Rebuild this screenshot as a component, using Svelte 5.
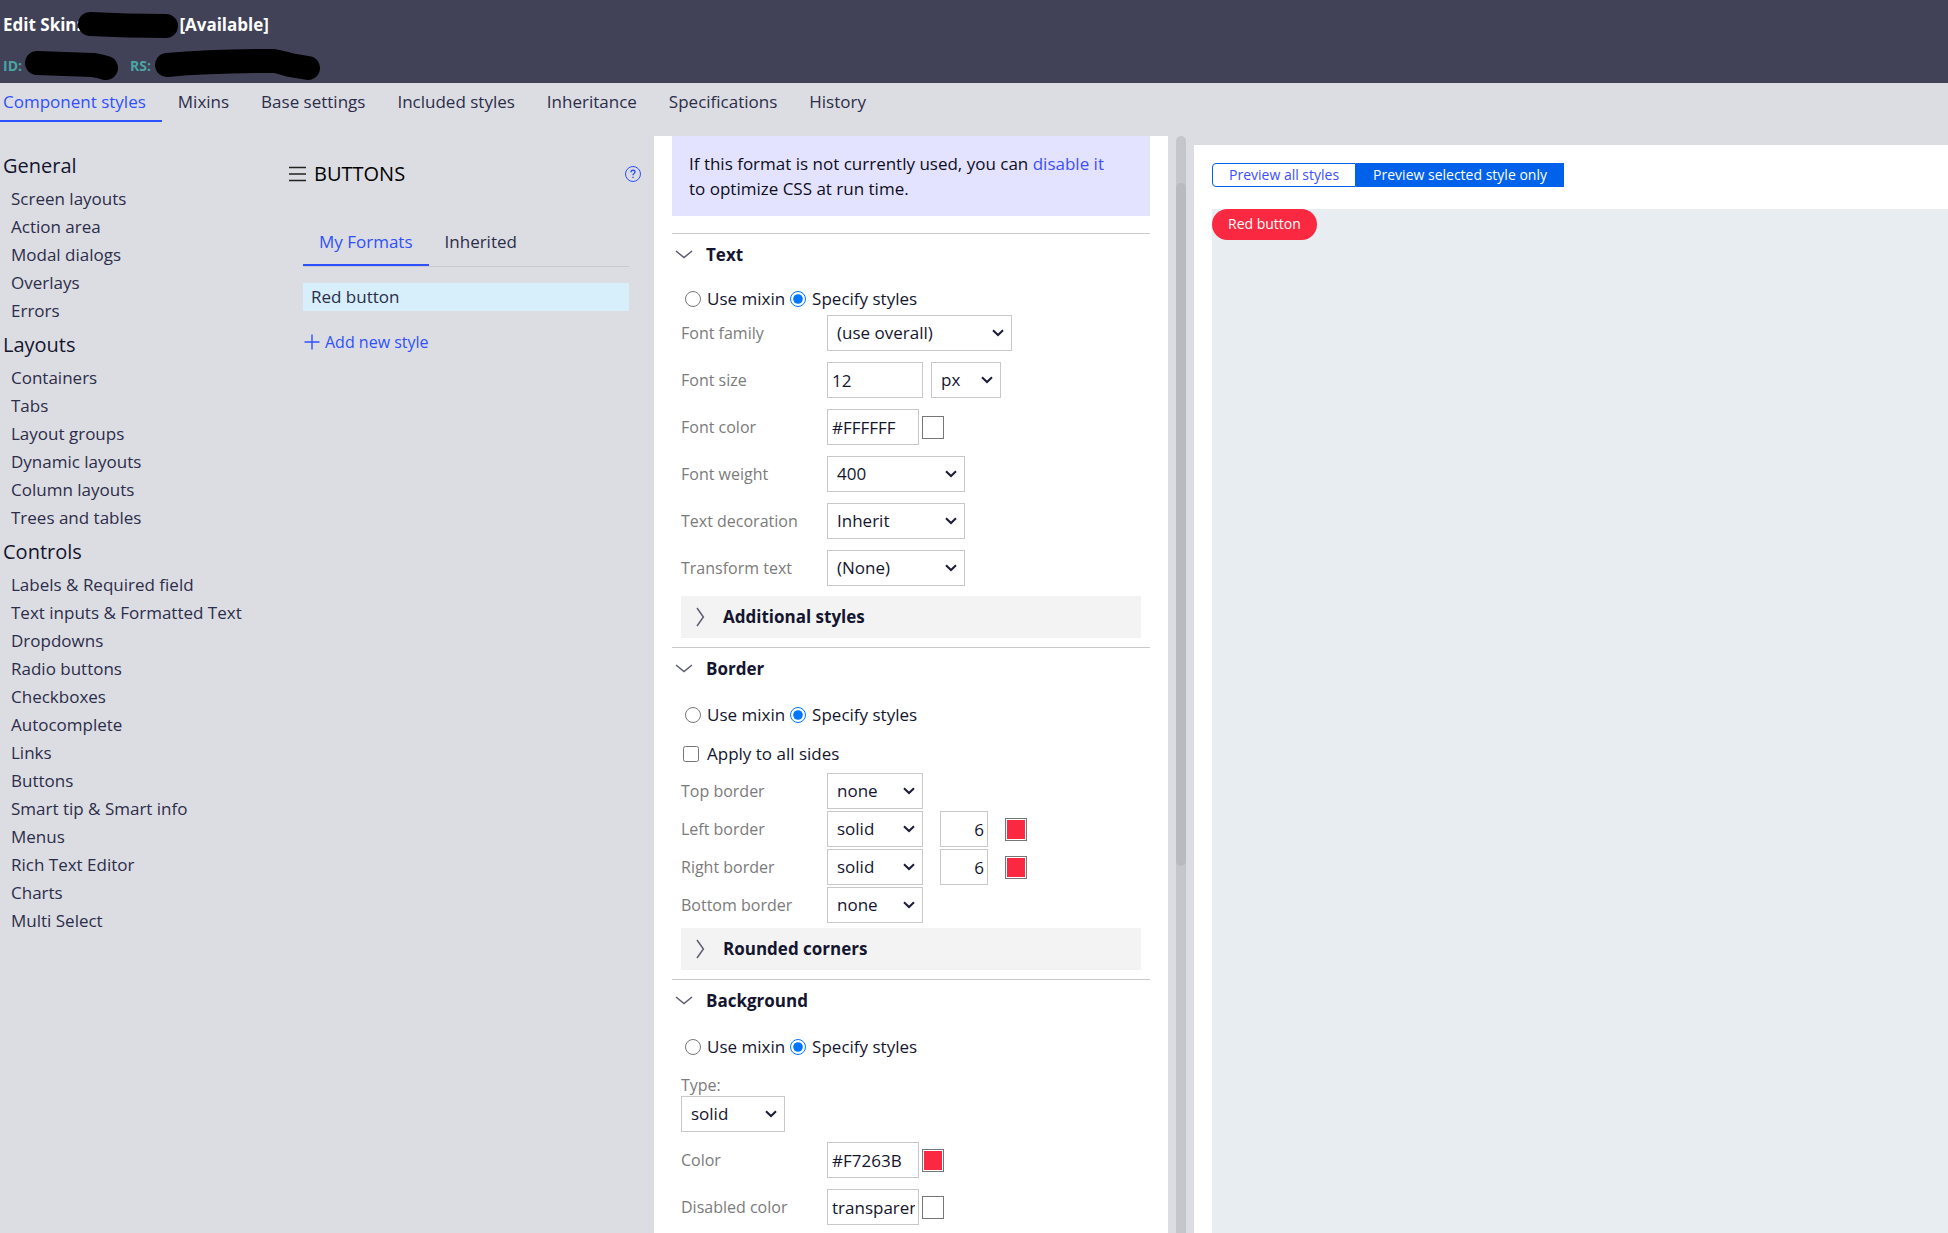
<script>
  let activeTab = $state('Component styles');
  let activeFormat = $state('My Formats');
  let previewAll = $state(false);

  let textMode = $state('specify');
  let borderMode = $state('specify');
  let backgroundMode = $state('specify');
  let allSides = $state(false);

  const tabs = [
    'Component styles',
    'Mixins',
    'Base settings',
    'Included styles',
    'Inheritance',
    'Specifications',
    'History',
  ];

  const groups = [
    {
      title: 'General',
      items: [
        'Screen layouts',
        'Action area',
        'Modal dialogs',
        'Overlays',
        'Errors',
      ],
    },
    {
      title: 'Layouts',
      items: [
        'Containers',
        'Tabs',
        'Layout groups',
        'Dynamic layouts',
        'Column layouts',
        'Trees and tables',
      ],
    },
    {
      title: 'Controls',
      items: [
        'Labels & Required field',
        'Text inputs & Formatted Text',
        'Dropdowns',
        'Radio buttons',
        'Checkboxes',
        'Autocomplete',
        'Links',
        'Buttons',
        'Smart tip & Smart info',
        'Menus',
        'Rich Text Editor',
        'Charts',
        'Multi Select',
      ],
    },
  ];

  const sides = [
    { label: 'Top border', style: 'none' },
    { label: 'Left border', style: 'solid', width: 6, color: '#fa2840' },
    { label: 'Right border', style: 'solid', width: 6, color: '#fa2840' },
    { label: 'Bottom border', style: 'none' },
  ];
</script>

{#snippet dropdown(id, value, size, label)}
  <span class="dropdown {size}">
    <select {id} aria-label={label}>
      <option>{value}</option>
    </select>
    <svg width="12" height="8" viewBox="0 0 12 8" aria-hidden="true">
      <path d="M1 1.2 L6 6 L11 1.2" />
    </svg>
  </span>
{/snippet}

{#snippet swatch(color, label)}
  <button class="swatch" aria-label={label}>
    <span style:background={color}></span>
  </button>
{/snippet}

{#snippet sectionTitle(title)}
  <h3>
    <svg width="18" height="10" viewBox="0 0 18 10" aria-hidden="true">
      <path d="M1 1 L9 7.6 L17 1" />
    </svg>
    {title}
  </h3>
{/snippet}

{#snippet subSection(title)}
  <button class="sub">
    <svg width="9" height="20" viewBox="0 0 9 20" aria-hidden="true">
      <path d="M1 1 L7.4 10 L1 19" />
    </svg>
    {title}
  </button>
{/snippet}

<div class="page">
  <header>
    <div class="title-row">
      <span>Edit Skin:</span>
      <svg class="mask" width="102" height="24" aria-hidden="true">
        <path d="M13 11 Q50 13 89 13" />
      </svg>
      <span>[Available]</span>
    </div>
    <div class="id-row">
      <span>ID:</span>
      <svg class="mask" width="107" height="24" aria-hidden="true">
        <path d="M14 9 L70 11 Q77 12 83 14" />
      </svg>
      <span>RS:</span>
      <svg class="mask" width="168" height="24" aria-hidden="true">
        <path d="M15 11 Q60 7 122 7 Q128 8 138 11 L156 14" />
      </svg>
    </div>
  </header>

  <nav class="tabs">
    {#each tabs as tab}
      <button class:active={activeTab === tab} onclick={() => (activeTab = tab)}>
        {tab}
      </button>
    {/each}
  </nav>

  <div class="columns">
    <aside class="nav">
      {#each groups as group}
        <h2>{group.title}</h2>
        <ul>
          {#each group.items as item}
            <li><a href="#top">{item}</a></li>
          {/each}
        </ul>
      {/each}
    </aside>

    <section class="formats">
      <div class="formats-head">
        <svg width="17" height="16" viewBox="0 0 17 16" aria-hidden="true">
          <path d="M0 1.5 H17 M0 8 H17 M0 14.5 H17" stroke="#222" stroke-width="1.3" />
        </svg>
        <h2>BUTTONS</h2>
        <button class="help" aria-label="Help">
          <svg width="18" height="18" viewBox="0 0 18 18" aria-hidden="true">
            <circle cx="9" cy="9" r="7.5" />
            <path d="M7 7.2 Q7 5.2 9 5.2 Q11 5.2 11 6.8 Q11 7.8 10 8.5 Q9 9.1 9 10.2 M9 11.7 V13.1" stroke-width="1.4" />
          </svg>
        </button>
      </div>
      <div class="formats-body">
        <div class="format-tabs">
          {#each ['My Formats', 'Inherited'] as name}
            <button
              class:active={activeFormat === name}
              onclick={() => (activeFormat = name)}
            >
              {name}
            </button>
          {/each}
        </div>
        <button class="format">Red button</button>
        <button class="add">
          <svg width="16" height="16" viewBox="0 0 16 16" aria-hidden="true">
            <path d="M8 0.5 V15.5 M0.5 8 H15.5" />
          </svg>
          Add new style
        </button>
      </div>
    </section>

    <main class="editor">
      <p class="notice">
        If this format is not currently used, you can <a href="#top">disable it</a><br />
        to optimize CSS at run time.
      </p>

      <section class="text">
        {@render sectionTitle('Text')}
        <div class="choice">
          <label><input type="radio" value="mixin" bind:group={textMode} />Use mixin</label>
          <label><input type="radio" value="specify" bind:group={textMode} />Specify styles</label>
        </div>
        <div class="rows">
          <div class="row">
            <label for="family">Font family</label>
            {@render dropdown('family', '(use overall)', 'wide')}
          </div>
          <div class="row">
            <label for="size">Font size</label>
            <input id="size" class="field size" type="text" value="12" />
            {@render dropdown('unit', 'px', 'tiny', 'Font size unit')}
          </div>
          <div class="row">
            <label for="color">Font color</label>
            <input id="color" class="field" type="text" value="#FFFFFF" />
            {@render swatch('#ffffff', 'Pick font color')}
          </div>
          <div class="row">
            <label for="weight">Font weight</label>
            {@render dropdown('weight', '400', 'medium')}
          </div>
          <div class="row">
            <label for="decoration">Text decoration</label>
            {@render dropdown('decoration', 'Inherit', 'medium')}
          </div>
          <div class="row">
            <label for="transform">Transform text</label>
            {@render dropdown('transform', '(None)', 'medium')}
          </div>
        </div>
        {@render subSection('Additional styles')}
      </section>

      <section class="border">
        {@render sectionTitle('Border')}
        <div class="choice">
          <label><input type="radio" value="mixin" bind:group={borderMode} />Use mixin</label>
          <label><input type="radio" value="specify" bind:group={borderMode} />Specify styles</label>
        </div>
        <label class="check">
          <input type="checkbox" bind:checked={allSides} />Apply to all sides
        </label>
        <div class="rows">
          {#each sides as side, i}
            <div class="row">
              <label for="side{i}">{side.label}</label>
              {@render dropdown(`side${i}`, side.style, 'small')}
              {#if side.width}
                <input
                  class="field number"
                  type="text"
                  aria-label="{side.label} width"
                  value={side.width}
                />
                {@render swatch(side.color, `Pick ${side.label} color`)}
              {/if}
            </div>
          {/each}
        </div>
        {@render subSection('Rounded corners')}
      </section>

      <section class="background">
        {@render sectionTitle('Background')}
        <div class="choice">
          <label><input type="radio" value="mixin" bind:group={backgroundMode} />Use mixin</label>
          <label><input type="radio" value="specify" bind:group={backgroundMode} />Specify styles</label>
        </div>
        <div class="type">
          <label for="type">Type:</label>
          {@render dropdown('type', 'solid', 'type-select')}
        </div>
        <div class="rows">
          <div class="row">
            <label for="bg">Color</label>
            <input id="bg" class="field" type="text" value="#F7263B" />
            {@render swatch('#fa2840', 'Pick color')}
          </div>
          <div class="row">
            <label for="disabled">Disabled color</label>
            <input id="disabled" class="field" type="text" value="transparent" />
            {@render swatch('#ffffff', 'Pick disabled color')}
          </div>
        </div>
      </section>
    </main>

    <div class="rail"><div class="thumb"></div></div>

    <section class="preview">
      <div class="switch">
        <button class:on={previewAll} onclick={() => (previewAll = true)}>
          Preview all styles
        </button>
        <button class:on={!previewAll} onclick={() => (previewAll = false)}>
          Preview selected style only
        </button>
      </div>
      <div class="canvas">
        <button class="red">Red button</button>
      </div>
    </section>
  </div>
</div>

<style>
  :global(body) {
    margin: 0;
    background: #dcdde2;
  }

  .page {
    min-height: 100vh;
    display: flex;
    flex-direction: column;
    font-family: 'Open Sans', 'Noto Sans', sans-serif;
    font-size: 17px;
    line-height: 24px;
    color: #2c2d4a;
    background: #dcdde2;
  }

  button,
  input,
  select {
    font: inherit;
    color: inherit;
    margin: 0;
    box-sizing: border-box;
  }

  button {
    padding: 0;
    border: 0;
    background: none;
    cursor: pointer;
  }

  a {
    text-decoration: none;
  }

  h2,
  h3,
  ul,
  p {
    margin: 0;
    padding: 0;
    list-style: none;
  }

  svg {
    fill: none;
    flex: none;
  }

  header {
    padding: 13px 3px 5px;
    background: #414257;
    color: #fff;
    font-weight: 700;
  }

  .title-row,
  .id-row {
    display: flex;
    align-items: center;
  }

  .id-row {
    margin-top: 17px;
    font-size: 14px;
    color: #4aa5a5;
  }

  .mask {
    overflow: visible;
    margin-left: 1px;
    stroke: #000;
    stroke-width: 24;
    stroke-linecap: round;
    stroke-linejoin: round;
  }

  .title-row .mask {
    margin-left: -4px;
  }

  .tabs {
    display: flex;
  }

  .tabs button {
    height: 39px;
    padding: 0 16px;
    border-bottom: 2px solid transparent;
  }

  .tabs button:first-child {
    padding-left: 3px;
  }

  .tabs button.active,
  .format-tabs button.active {
    color: #2e50ff;
    border-bottom-color: #2e50ff;
  }

  .columns {
    flex: 1;
    display: grid;
    grid-template-columns: 288px 366px 514px 26px 1fr;
  }

  .nav {
    padding-top: 24px;
  }

  .nav h2 {
    padding-left: 3px;
    font-size: 20px;
    font-weight: 500;
    line-height: 39px;
    color: #14152f;
  }

  .nav li {
    padding-left: 11px;
    line-height: 28px;
  }

  .nav a {
    color: inherit;
  }

  .formats {
    padding: 40px 12px 0 1px;
  }

  .formats-head {
    display: flex;
    align-items: center;
    gap: 8px;
    color: #000;
  }

  .formats-head h2 {
    flex: 1;
    font-size: 20px;
    font-weight: 500;
  }

  .help {
    display: flex;
  }

  .help svg {
    stroke: #2e50ff;
  }

  .formats-body {
    margin: 32px 13px 0 14px;
  }

  .format-tabs {
    display: flex;
    border-bottom: 1px solid #c8c9cc;
  }

  .format-tabs button {
    height: 48px;
    padding: 2px 16px 0;
    border-bottom: 2px solid transparent;
  }

  .format {
    display: block;
    width: 100%;
    height: 28px;
    margin-top: 16px;
    padding-left: 8px;
    text-align: left;
    background: #d6effb;
  }

  .add {
    display: flex;
    align-items: center;
    gap: 5px;
    margin: 19px 0 0 1px;
    font-size: 16px;
    color: #2e50ff;
  }

  .add svg {
    stroke: #2e50ff;
    stroke-width: 1.4;
  }

  .editor {
    margin-top: 14px;
    padding: 0 18px 5px;
    background: #fff;
  }

  .notice {
    margin-bottom: 17px;
    padding: 15px 17px;
    line-height: 25px;
    color: #0c0d1c;
    background: #e4e3ff;
  }

  .notice a {
    color: #3d4eff;
  }

  .editor section {
    border-top: 1px solid #c8c9cc;
    padding-bottom: 9px;
  }

  .editor .background {
    padding-bottom: 0;
  }

  h3 {
    display: flex;
    align-items: center;
    gap: 13px;
    margin-top: 9px;
    padding-left: 3px;
    font-size: 17px;
    font-weight: 700;
    color: #14152f;
  }

  h3 svg,
  .sub svg {
    stroke: #5c5d72;
    stroke-width: 1.5;
  }

  .choice {
    display: flex;
    gap: 5px;
    margin: 22px 0 15px 13px;
  }

  .text .choice {
    margin-top: 20px;
    margin-bottom: 4px;
  }

  .choice label,
  .check {
    display: flex;
    align-items: center;
    gap: 6px;
    color: #14152f;
  }

  .choice input,
  .check input {
    width: 16px;
    height: 16px;
  }

  .check {
    gap: 8px;
    margin: 0 0 7px 11px;
  }

  .rows {
    display: flex;
    flex-direction: column;
    gap: 11px;
    padding-left: 9px;
  }

  .border .rows {
    gap: 2px;
  }

  .row {
    display: flex;
    align-items: center;
  }

  .row label,
  .type label {
    font-size: 16px;
    color: #7b7b7b;
  }

  .row label {
    width: 146px;
  }

  .field {
    width: 92px;
    height: 36px;
    padding: 0 3px 0 4px;
    border: 1px solid #c8c8c8;
    background: #fff;
    color: #14152f;
  }

  .field.size {
    width: 96px;
    margin-right: 8px;
  }

  .field.number {
    width: 48px;
    margin: 0 14px 0 17px;
    text-align: right;
  }

  .dropdown {
    display: inline-grid;
    align-items: center;
  }

  .dropdown select,
  .dropdown svg {
    grid-area: 1 / 1;
  }

  .dropdown select {
    appearance: none;
    width: 100%;
    height: 36px;
    padding: 0 9px;
    border: 1px solid #c8c8c8;
    border-radius: 0;
    background: #fff;
    color: #14152f;
  }

  .dropdown svg {
    justify-self: end;
    margin-right: 8px;
    pointer-events: none;
    stroke: #1b1c38;
    stroke-width: 2;
  }

  .wide {
    width: 185px;
  }

  .medium {
    width: 138px;
  }

  .small {
    width: 96px;
  }

  .tiny {
    width: 70px;
  }

  .type-select {
    width: 104px;
  }

  .swatch {
    display: flex;
    width: 22px;
    height: 23px;
    margin-left: 3px;
    padding: 1px;
    border: 1px solid #767676;
    background: #fff;
  }

  .swatch span {
    flex: 1;
  }

  .type {
    display: flex;
    flex-direction: column;
    align-items: flex-start;
    margin: 0 0 10px 9px;
    line-height: 22px;
  }

  .sub {
    display: flex;
    align-items: center;
    gap: 18px;
    width: calc(100% - 18px);
    height: 42px;
    margin: 10px 9px 0;
    padding: 0 15px;
    background: #f3f3f3;
    font-weight: 700;
    color: #14152f;
  }

  .border .sub {
    margin-top: 5px;
  }

  .rail {
    display: flex;
    align-items: flex-start;
    margin: 14px 8px 0;
    padding-top: 47px;
    border-radius: 5px 5px 0 0;
    background: #c5c6cb;
  }

  .thumb {
    width: 100%;
    height: 65%;
    border-radius: 5px;
    background: #b9babf;
  }

  .preview {
    display: flex;
    flex-direction: column;
    margin-top: 23px;
    padding: 18px 0 0 18px;
    background: #fff;
    font-size: 14px;
  }

  .switch {
    display: flex;
    margin-bottom: 22px;
  }

  .switch button {
    height: 24px;
    padding: 0 16px;
    border: 1px solid #0061eb;
    border-radius: 4px 0 0 4px;
    line-height: 22px;
    color: #3d4eff;
  }

  .switch button + button {
    border-radius: 0;
  }

  .switch button.on {
    background: #0061eb;
    color: #fff;
  }

  .canvas {
    flex: 1;
    background: #e8edf1;
  }

  .red {
    display: block;
    height: 31px;
    padding: 0 16px 2px;
    border-radius: 16px;
    background: #fa2840;
    color: #fff;
  }
</style>
